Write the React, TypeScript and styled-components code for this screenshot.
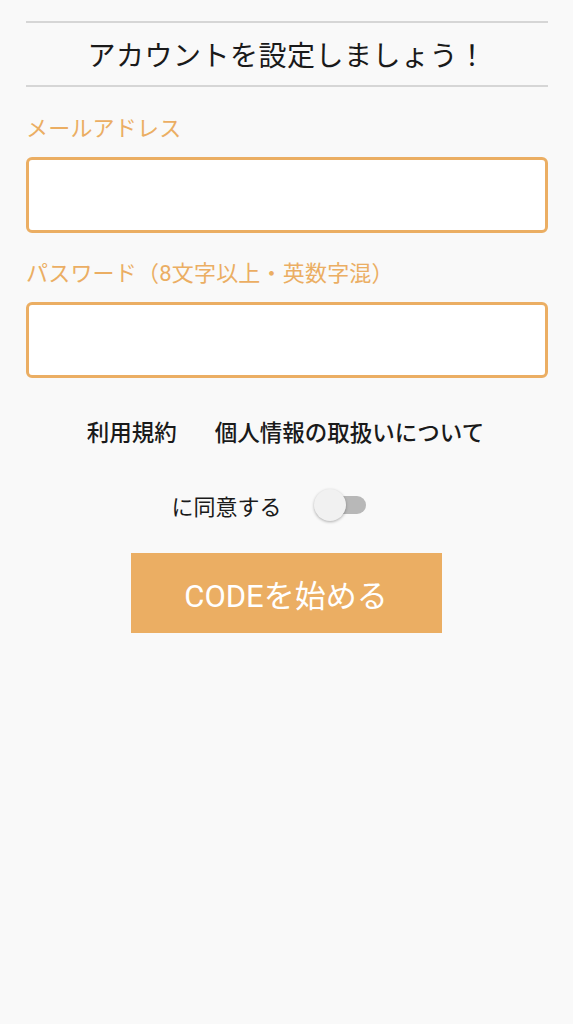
import React, { useState } from 'react';
import styled, { createGlobalStyle } from 'styled-components';

const GlobalStyle = createGlobalStyle`
  html, body {
    margin: 0;
    padding: 0;
    background: #f9f9f9;
  }
  body {
    font-family: Roboto, "Noto Sans CJK JP", "Noto Sans", sans-serif;
  }
`;

const ORANGE = '#ebae63';

const Page = styled.div`
  width: 573px;
  min-height: 1024px;
  background: #f9f9f9;
  padding: 21px 25px 0 26px;
  box-sizing: border-box;
`;

const TitleBar = styled.div`
  border-top: 2px solid #d6d6d6;
  border-bottom: 2px solid #d6d6d6;
  height: 62px;
  display: flex;
  align-items: center;
  justify-content: center;
  font-size: 28px;
  color: #1a1a1a;
  letter-spacing: 0.5px;
`;

const Field = styled.div`
  display: flex;
  flex-direction: column;
`;

const Label = styled.label<{ $top: number }>`
  color: ${ORANGE};
  font-size: 22px;
  letter-spacing: 0.2px;
  margin-top: ${(p) => p.$top}px;
  line-height: 30px;
  height: 30px;
`;

const Input = styled.input`
  margin-top: 13px;
  height: 76px;
  box-sizing: border-box;
  border: 3px solid ${ORANGE};
  border-radius: 6px;
  background: #fff;
  outline: none;
  font-size: 22px;
  padding: 0 12px;
`;

const Links = styled.div`
  display: flex;
  justify-content: center;
  gap: 38px;
  margin-top: 40px;
  padding-right: 3px;
  font-size: 22.5px;
  font-weight: 500;
  color: #1a1a1a;
  line-height: 30px;
`;

const Link = styled.a`
  color: inherit;
  text-decoration: none;
`;

const AgreeRow = styled.div`
  display: flex;
  align-items: center;
  justify-content: center;
  gap: 32px;
  margin-top: 40px;
  padding-right: 37px;
  font-size: 22px;
  color: #1a1a1a;
`;

const Track = styled.button`
  position: relative;
  width: 52px;
  height: 34px;
  border: none;
  background: transparent;
  padding: 0;
  cursor: pointer;
  &::before {
    content: '';
    position: absolute;
    left: 14px;
    right: 0;
    top: 8px;
    height: 18px;
    border-radius: 9px;
    background: #b8b8b8;
  }
`;

const Thumb = styled.span<{ $on: boolean }>`
  position: absolute;
  top: 1px;
  left: ${(p) => (p.$on ? 20 : 0)}px;
  width: 32px;
  height: 32px;
  border-radius: 50%;
  background: ${(p) => (p.$on ? ORANGE : '#f1f1f1')};
  box-shadow: 0 1px 3px rgba(0, 0, 0, 0.3);
`;

const StartButton = styled.button`
  display: block;
  margin: 31px auto 0;
  width: 311px;
  height: 80px;
  border: none;
  background: #ebae63;
  color: #fff;
  font-family: Roboto, "Noto Sans CJK JP", sans-serif;
  font-size: 31px;
  position: relative;
  left: -1px;
`;

export default function App() {
  const [agree, setAgree] = useState(false);
  return (
    <>
      <GlobalStyle />
      <Page>
        <TitleBar>アカウントを設定しましょう！</TitleBar>
        <Field>
          <Label $top={27}>メールアドレス</Label>
          <Input type="email" />
        </Field>
        <Field>
          <Label $top={26}>パスワード（8文字以上・英数字混）</Label>
          <Input type="password" />
        </Field>
        <Links>
          <Link href="#">利用規約</Link>
          <Link href="#">個人情報の取扱いについて</Link>
        </Links>
        <AgreeRow>
          <span>に同意する</span>
          <Track onClick={() => setAgree(!agree)} aria-pressed={agree}>
            <Thumb $on={agree} />
          </Track>
        </AgreeRow>
        <StartButton>CODEを始める</StartButton>
      </Page>
    </>
  );
}
